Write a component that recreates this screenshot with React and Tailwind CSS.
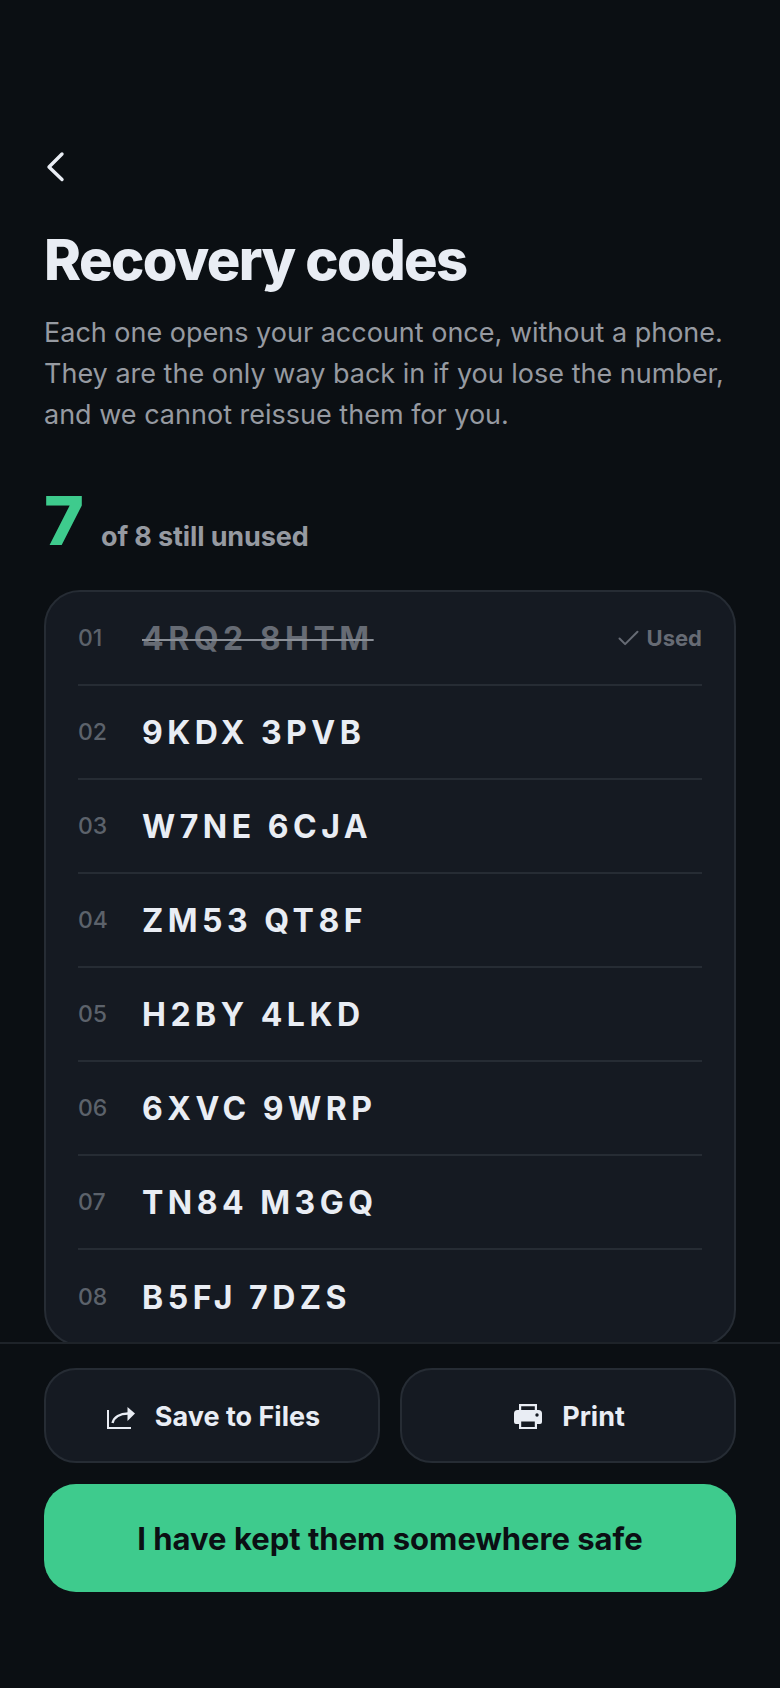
import { Check } from "lucide-react";

const codes = [
  ["01", "4RQ2 8HTM", true],
  ["02", "9KDX 3PVB"],
  ["03", "W7NE 6CJA"],
  ["04", "ZM53 QT8F"],
  ["05", "H2BY 4LKD"],
  ["06", "6XVC 9WRP"],
  ["07", "TN84 M3GQ"],
  ["08", "B5FJ 7DZS"],
];

function ShareIcon() {
  return (
    <svg width="28" height="22" viewBox="0 0 28 22" fill="none" stroke="#e9edf4" strokeWidth="2" className="mt-[1px]">
      <path d="M1 3v18h23" />
      <path d="M5.5 16C7 10 13 6.5 21 6.5" strokeWidth="2.4" />
      <path d="M20.5 0L28 6.5 20.5 14z" fill="#e9edf4" stroke="none" />
    </svg>
  );
}

function PrintIcon() {
  return (
    <svg width="28" height="25" viewBox="0 0 28 25" fill="#e9edf4" className="-mt-[3px]">
      <path d="M5 0h18v7h-2.2V2.2H7.2V7H5z" />
      <path d="M3.5 6h21A3.5 3.5 0 0 1 28 9.5V18a2 2 0 0 1-2 2H2a2 2 0 0 1-2-2V9.5A3.5 3.5 0 0 1 3.5 6z" />
      <path d="M5 15h18v10H5z" />
      <path d="M7.2 17.500h13.6V23H7.2z" fill="#151a22" />
      <circle cx="23" cy="11" r="1.7" fill="#151a22" />
    </svg>
  );
}

export default function App() {
  return (
    <div className="h-[1688px] w-[780px] flex flex-col overflow-hidden bg-[#0b0f13] font-['Inter',sans-serif]">
      <div className="flex-1 min-h-0 overflow-hidden px-[44px] pt-[151px]">
        <svg width="20" height="32" viewBox="0 0 20 32" fill="none" stroke="#e9edf4" strokeWidth="3.4" strokeLinecap="round" strokeLinejoin="round" className="ml-[2px]">
          <path d="M16 3L3 16l13 12.500" />
        </svg>

        <h1 className="mt-[43px] text-[56px] leading-[68px] font-[850] tracking-[-1.6px] text-[#e9edf4]">
          Recovery codes
        </h1>
        <p className="mt-[18px] text-[27px] leading-[41px] text-[#969aa1]">
          Each one opens your account once, without a phone.
          <br />
          They are the only way back in if you lose the number,
          <br />
          and we cannot reissue them for you.
        </p>

        <div className="mt-[45px] flex items-baseline gap-[17px]">
          <span className="text-[68px] leading-[80px] font-[850] text-[#3ecb8d]">7</span>
          <span className="translate-y-px text-[27px] font-[650] tracking-[-0.12px] text-[#969aa1]">of 8 still unused</span>
        </div>

        <div className="mt-[30px] rounded-[36px] border-2 border-[#262c34] bg-[#151a22] px-[32px]">
          {codes.map(([num, code, used], i) => (
            <div
              key={num}
              className={`flex items-center h-[94px] ${i < codes.length - 1 ? "border-b-2 border-[#262c34]" : ""}`}
            >
              <span className="w-[64px] text-[23px] font-medium text-[#5c626b]">{num}</span>
              {used ? (
                <>
                  <span className="mt-[2px] text-[32px] font-bold tracking-[4.5px] text-[#666b74] line-through decoration-2 decoration-[#8b9098]">
                    {code}
                  </span>
                  <span className="ml-auto flex items-center gap-[5px] text-[22px] font-[650] text-[#666b74]">
                    <Check size={27} strokeWidth={1.8} />
                    Used
                  </span>
                </>
              ) : (
                <span className="mt-[2px] text-[32px] font-bold tracking-[4.5px] text-[#e9edf4]">{code}</span>
              )}
            </div>
          ))}
        </div>
      </div>

      <div className="border-t-2 border-[#1e2329] px-[44px] pt-[24px] pb-[96px]">
        <div className="grid grid-cols-2 gap-[20px]">
          <button className="h-[95px] pt-[4px] pl-[3px] flex items-center justify-center gap-[20px] rounded-[32px] border-2 border-[#262c34] bg-[#151a22] text-[27px] font-[650] text-[#e9edf4]">
            <ShareIcon />
            Save to Files
          </button>
          <button className="h-[95px] pt-[4px] pl-[3px] flex items-center justify-center gap-[20px] rounded-[32px] border-2 border-[#262c34] bg-[#151a22] text-[27px] font-[650] text-[#e9edf4]">
            <PrintIcon />
            Print
          </button>
        </div>
        <button className="mt-[21px] w-full h-[108px] pt-[2px] rounded-[32px] bg-[#3ecb8d] text-[31px] font-bold text-[#0b0f13]">
          I have kept them somewhere safe
        </button>
      </div>
    </div>
  );
}
